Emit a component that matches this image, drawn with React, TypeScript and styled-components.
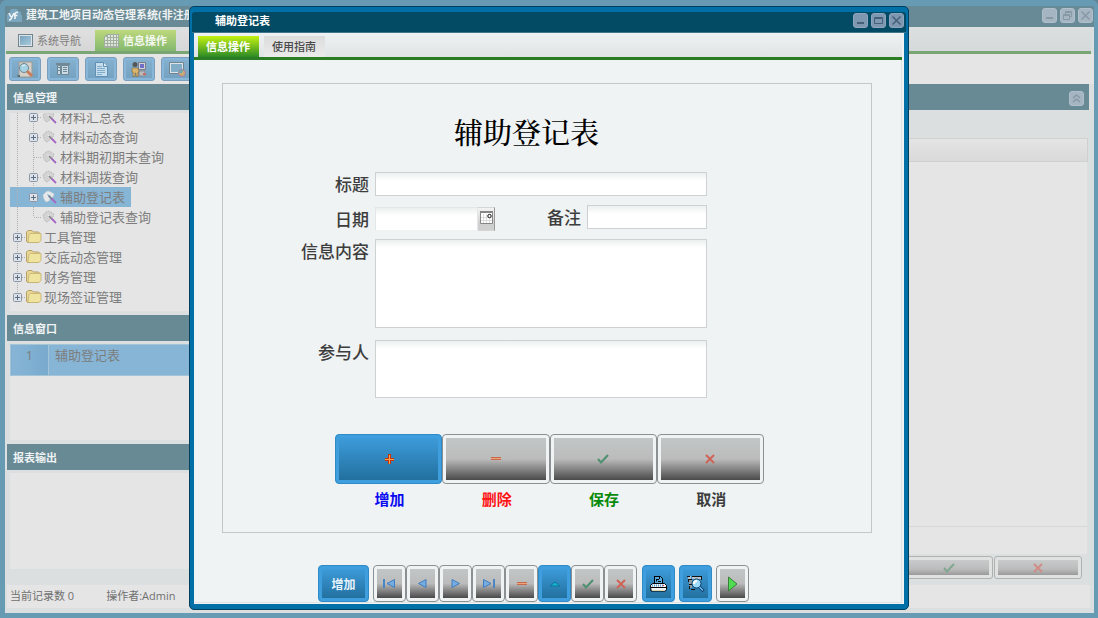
import React from "react";
import styled, { createGlobalStyle, css } from "styled-components";

const GlobalStyle = createGlobalStyle`
  *, *::before, *::after { box-sizing: border-box; }
  html, body { margin: 0; padding: 0; }
  body, button, input, textarea {
    font-family: "Open Sans", "Noto Sans CJK SC", sans-serif;
    font-size: 11px;
  }
  button { cursor: pointer; }
  h1, h2, ul { margin: 0; padding: 0; }
`;

/* ---------- main window ---------- */

const Desktop = styled.div`
  position: relative;
  display: flex;
  min-height: 100vh;
  background: #628496;
`;

const MainWindow = styled.div`
  flex: 1;
  display: flex;
  flex-direction: column;
  border: 5px solid #679ab3;
  border-top: 6px solid #679ab3;
  border-right-width: 4px;
  border-radius: 6px 6px 0 0;
  background: #dcdfdf;
  box-shadow: inset 0 0 0 1px #dcdfdf;
`;

const MainTitle = styled.header`
  display: flex;
  align-items: center;
  gap: 4px;
  height: 21px;
  padding: 0 0 3px 2px;
  background: #688a96;
`;

const MainTitleText = styled.h1`
  flex: 1;
  color: #eef2f3;
  font-size: 11px;
  line-height: 18px;
`;

const WindowButtons = styled.div`
  display: flex;
  gap: 3px;
  padding-right: 1px;
`;

const WindowButton = styled.button<{ $faded?: boolean }>`
  display: flex;
  align-items: center;
  justify-content: center;
  width: 15px;
  height: 15px;
  padding: 0;
  border: 1px solid ${(p) => (p.$faded ? "#b0bfcb" : "#8fa5bd")};
  border-radius: 3px;
  background: ${(p) => (p.$faded ? "#a5b5c2" : "#7e98b2")};
  color: ${(p) => (p.$faded ? "#8798a6" : "#465f78")};
`;

const MainTabs = styled.nav`
  display: flex;
  align-items: flex-end;
  height: 27px;
  margin: 0 3px 0 1px;
  padding-left: 3px;
  border-bottom: 3px solid #7aa574;
  background: linear-gradient(#dcdfdf, #d5d9da);
`;

const MainTab = styled.button<{ $active?: boolean }>`
  display: flex;
  align-items: center;
  gap: 4px;
  min-width: 80px;
  height: 21px;
  padding: 0 9px;
  border: 0;
  font-size: 11px;
  line-height: 18px;
  ${(p) =>
    p.$active
      ? css`
          margin-right: 5px;
          background: linear-gradient(#bdd87c, #83b86e);
          color: #f4f8ef;
          font-weight: 700;
        `
      : css`
          padding-right: 14px;
          background: linear-gradient(#e0e0e0, #d6d6d6);
          color: #808080;
        `}
`;

const MainToolbar = styled.div`
  display: flex;
  align-items: center;
  gap: 6px;
  height: 30px;
  margin-left: 1px;
  padding-left: 3px;
  background: #e5e5e5;
`;

const ToolButton = styled.button`
  display: flex;
  align-items: center;
  justify-content: center;
  width: 32px;
  height: 24px;
  padding: 2px;
  border: 1px solid #7a9ebb;
  border-radius: 3px;
  background: linear-gradient(#84b0d0, #76a2c2) content-box, #87b6d8;
`;

const MainBody = styled.div`
  flex: 1;
  display: flex;
  margin: 0 5px 0 1px;
`;

const Sidebar = styled.aside`
  display: flex;
  flex-direction: column;
  width: 220px;
  padding-left: 1px;
`;

const PanelHeader = styled.div`
  display: flex;
  align-items: center;
  justify-content: space-between;
  height: 26px;
  padding: 2px 5px 0 6px;
  background: #678a95;
`;

const PanelTitle = styled.h2`
  color: #f0f3f4;
  font-size: 11px;
  line-height: 18px;
`;

const PanelBody = styled.div<{ $grow?: boolean }>`
  ${(p) => p.$grow && "flex: 1;"}
  margin: 3px 0 ${(p) => (p.$grow ? 16 : 4)}px 3px;
  background: #e5e5e5;
`;

const TreeList = styled.ul`
  list-style: none;
  padding-bottom: 4px;
`;

const TreeItem = styled.li<{ $clipped?: boolean }>`
  display: flex;
  height: ${(p) => (p.$clipped ? 14 : 20)}px;
  align-items: flex-end;
  overflow: hidden;
`;

const TreeButton = styled.button<{ $selected?: boolean }>`
  display: flex;
  align-items: center;
  height: 20px;
  padding: 0 6px 0 0;
  border: 0;
  background: ${(p) => (p.$selected ? "#87b5d6" : "transparent")};
  color: #7d7d7d;
  font-size: 13px;
  line-height: 20px;
`;

const TreeCell = styled.svg`
  display: block;
  width: 16px;
  height: 20px;
  flex: none;
`;

const TreeText = styled.span`
  padding-left: 2px;
`;

const WindowList = styled.table`
  width: 100%;
  border-collapse: collapse;
  color: #7d7d7d;
`;

const WindowRow = styled.tr`
  height: 31px;
  background: #87b5d6;
  border: 1px solid #a5c4d8;
`;

const IndexCell = styled.td`
  width: 38px;
  padding: 0;
  border-right: 1px solid #a5c4d8;
  background: linear-gradient(90deg, #87b5d6, #78aacd);
  text-align: center;
  vertical-align: top;
  font-size: 13px;
  line-height: 20px;
`;

const NameCell = styled.td`
  padding: 0 0 0 6px;
  vertical-align: top;
  font-size: 13px;
  line-height: 20px;
`;

const ListBody = styled(PanelBody)`
  height: 96px;
`;

const MainPane = styled.main`
  flex: 1;
  display: flex;
  flex-direction: column;
`;

const GridHeader = styled.div`
  height: 24px;
  margin: 28px 1px 0 0;
  border: 1px solid #cfd1d1;
  background: linear-gradient(#e4e4e4, #d9d9d9);
`;

const GridArea = styled.div`
  flex: 1;
  margin-right: 2px;
  background: #e5e5e5;
`;

const GridFooter = styled.div`
  height: 28px;
  margin-right: 2px;
  border-top: 1px solid #d6d8d8;
  background: #e5e5e5;
`;

const PaneActions = styled.div`
  display: flex;
  justify-content: flex-end;
  gap: 1px;
  padding: 2px 7px 6px 0;
`;

const FadedButton = styled.button`
  display: flex;
  align-items: center;
  justify-content: center;
  width: 88px;
  height: 23px;
  padding: 3px;
  border: 1px solid #b0b2b2;
  border-radius: 3px;
  background: linear-gradient(#c8cacb, #bcbcbc 60%, #9a9a9a) content-box, #e0e2e2;
`;

const StatusBar = styled.footer`
  display: flex;
  gap: 32px;
  height: 23px;
  margin: 0 4px 5px 2px;
  padding-left: 3px;
  background: #e5e5e5;
  color: #707070;
  line-height: 22px;
`;

/* ---------- dialog ---------- */

const Dialog = styled.section`
  position: absolute;
  inset: 6px 189px 8px;
  display: flex;
  flex-direction: column;
  border: 1px solid #003f5e;
  border-radius: 5px;
  background: #0070a6;
  padding: 5px 4px;
`;

const DialogTitle = styled.header`
  display: flex;
  align-items: center;
  justify-content: space-between;
  height: 21px;
  margin: 0 -2px;
  padding: 0 1px 4px 23px;
  border-radius: 3px 3px 0 0;
  background: #034a64;
  border-bottom: 1px solid #43788c;
`;

const DialogTitleText = styled.h2`
  padding-top: 1px;
  color: #fff;
  font-size: 11px;
  line-height: 16px;
`;

const DialogBody = styled.div`
  flex: 1;
  display: flex;
  flex-direction: column;
  padding: 0 2px 1px 0;
  background: #eff3f4;
`;

const DialogTabs = styled.nav`
  display: flex;
  align-items: flex-end;
  gap: 5px;
  height: 27px;
  padding-left: 4px;
  border-bottom: 3px solid #2b7d23;
  background: linear-gradient(#eef2f3, #dfe4e4);
`;

const DialogTab = styled.button<{ $active?: boolean }>`
  height: 21px;
  padding: 0 9px 0 8px;
  border: 0;
  font-size: 11px;
  line-height: 18px;
  background: ${(p) =>
    p.$active ? "linear-gradient(#c4f312, #2c8a26)" : "linear-gradient(#dcdcdc, #ebebeb)"};
  color: ${(p) => (p.$active ? "#fff" : "#4a4a4a")};
  font-weight: ${(p) => (p.$active ? 700 : 500)};
`;

const DialogContent = styled.div`
  flex: 1;
  display: flex;
  flex-direction: column;
  padding: 23px 29px 0 28px;
  border-right: 1px solid #dde2e3;
  border-bottom: 1px solid #dde2e3;
`;

const FormBox = styled.form`
  flex: 1;
  padding: 30px 107px 0 78px;
  border: 1px solid #c3c7c9;
`;

const FormTitle = styled.h1`
  padding: 0 12px 0 0;
  color: #000;
  font-family: "Liberation Serif", "Noto Serif CJK SC", "Noto Sans CJK SC", serif;
  font-size: 29px;
  font-weight: 500;
  line-height: 40px;
  text-align: center;
`;

const Fields = styled.div`
  display: grid;
  grid-template-columns: 68px 1fr;
  column-gap: 6px;
  margin: 18px 57px 0 0;
`;

const FieldLabel = styled.label`
  padding-top: 1px;
  color: #3d3d3d;
  font-size: 17px;
  font-weight: 500;
  line-height: 24px;
  text-align: right;
  white-space: nowrap;
`;

const fieldLook = css`
  display: block;
  width: 100%;
  margin: 0;
  padding: 2px 4px;
  border: 1px solid #cdd1d2;
  border-radius: 0;
  outline: 0;
  background: linear-gradient(#edf0f0, #fff 8px);
`;

const TextInput = styled.input`
  ${fieldLook}
  height: 24px;
`;

const DateInput = styled(TextInput)`
  border-color: #e3e7e8 #e3e7e8 #eff3f4;
`;

const TextArea = styled.textarea<{ $tall?: boolean }>`
  ${fieldLook}
  height: ${(p) => (p.$tall ? 89 : 58)}px;
  margin-bottom: ${(p) => (p.$tall ? 12 : 36)}px;
  resize: none;
`;

const SplitRow = styled.div`
  display: grid;
  grid-template-columns: 1fr 80px 1fr;
  column-gap: 6px;
  align-items: start;
  margin: 8px 0;
`;

const DateField = styled.div`
  display: flex;
  padding-top: 2px;
`;

const DateLabel = styled(FieldLabel)`
  padding-top: 11px;
`;

const CalendarButton = styled.button`
  display: flex;
  flex: none;
  align-items: flex-start;
  justify-content: center;
  width: 17px;
  height: 24px;
  padding: 3px 1px 0;
  border: 1px solid #d6d6d6;
  border-left: 0;
  border-right-color: #999;
  background: linear-gradient(#f4f4f4, #cfcfcf 70%);
`;

const ActionRow = styled.div`
  display: grid;
  grid-template-columns: repeat(4, 1fr);
  margin-left: 34px;
`;

const Action = styled.div`
  display: flex;
  flex-direction: column;
`;

const ActionLabel = styled.label<{ $color: string }>`
  padding: 5px 0 0 2px;
  color: ${(p) => p.$color};
  font-size: 15px;
  font-weight: 700;
  line-height: 20px;
  text-align: center;
`;

const BevelButton = styled.button<{ $primary?: boolean; $size: "action" | "text" | "icon" }>`
  display: flex;
  align-items: center;
  justify-content: center;
  width: ${(p) => ({ action: "100%", text: "51px", icon: "33px" })[p.$size]};
  height: ${(p) => (p.$size === "action" ? 50 : 37)}px;
  padding: 3px;
  border: 1px solid ${(p) => (p.$primary ? "#2f8ac6" : "#8c9092")};
  border-radius: 4px;
  color: #e8f3fb;
  font-size: 12px;
  font-weight: 700;
  background: ${(p) =>
    p.$primary
      ? "linear-gradient(#3d9bd9, #22709f) content-box, #3f9edd"
      : "linear-gradient(#c2c6c7, #bbbbbb 50%, #4a4a4a) content-box, #f0f3f4"};
`;

const NavBar = styled.div`
  display: flex;
  justify-content: center;
  gap: 4px;
  padding: 32px 27px 0 0;
`;

const NavGroup = styled.div`
  display: flex;
  margin-right: 1px;
`;

/* ---------- drawings ---------- */

const Minimize = () => (
  <svg width="11" height="11" viewBox="0 0 11 11">
    <path d="M2 7h7v2H2z" fill="currentColor" />
  </svg>
);
const Maximize = () => (
  <svg width="11" height="11" viewBox="0 0 11 11" fill="none" stroke="currentColor">
    <path d="M1.5 2.5h8v6h-8zM1.5 3.5h8" />
  </svg>
);
const Restore = () => (
  <svg width="11" height="11" viewBox="0 0 11 11" fill="none" stroke="currentColor">
    <path d="M3.5 4V1.500h6v5H8M3.500 2.500h6M1.500 4.500h6v5h-6zM1.500 5.500h6" />
  </svg>
);
const Close = () => (
  <svg width="11" height="11" viewBox="0 0 11 11" fill="none" stroke="currentColor" strokeWidth="1.500">
    <path d="M1.500 1.500l8 8M9.500 1.500l-8 8" />
  </svg>
);
const Collapse = () => (
  <svg width="11" height="11" viewBox="0 0 11 11" fill="none" stroke="currentColor" strokeWidth="1.500">
    <path d="M2 5l3.500-3L9 5M2 9l3.500-3L9 9" />
  </svg>
);

const Logo = () => (
  <svg width="15" height="13" viewBox="0 0 15 13">
    <path d="M3 13a3 3 0 0 1-3-5 3 3 0 0 1 3-4 4 4 0 0 1 8-2 3 3 0 0 1 3 4 3 3 0 0 1-1 7z" fill="#7ba6bf" />
    <path d="M2 4l2 4M7 4l-3 6q-1 1-2 1M8 10V5q0-2 3-1.500M7 6.500h3.500" stroke="#eef4f6" strokeWidth="1.600" fill="none" />
  </svg>
);
const ScreenIcon = () => (
  <svg width="15" height="13" viewBox="0 0 15 13">
    <defs>
      <linearGradient id="screen" x1="0" y1="0" x2="1" y2="1">
        <stop offset="0" stopColor="#76a3bf" />
        <stop offset="1" stopColor="#a9cadb" />
      </linearGradient>
    </defs>
    <path d="M0 0h15v13H0z" fill="#72848e" />
    <path d="M1 1h13v11H1z" fill="#dce4e8" />
    <path d="M2 2h11v9H2z" fill="url(#screen)" />
  </svg>
);
const GridIcon = () => (
  <svg width="15" height="14" viewBox="0 0 15 14">
    <path d="M3 0h12v14H0V3z" fill="#a2aea0" />
    <path
      d="M1 3h2v1H1zM4 1h2v2H4zM7 1h2v2H7zM10 1h2v2h-2zM13 1h1v2h-1zM1 4h2v2H1zM4 4h2v2H4zM7 4h2v2H7zM10 4h2v2h-2zM13 4h1v2h-1zM1 7h2v2H1zM4 7h2v2H4zM7 7h2v2H7zM10 7h2v2h-2zM13 7h1v2h-1zM1 10h2v2H1zM4 10h2v2H4zM7 10h2v2H7zM10 10h2v2h-2zM13 10h1v2h-1z"
      fill="#dfe6dc"
    />
  </svg>
);
const SearchPageIcon = () => (
  <svg width="17" height="17" viewBox="0 0 17 17">
    <path d="M2 1h13v15H2z" fill="#d5d0c8" stroke="#9a9a96" />
    <circle cx="7" cy="7" r="4.500" fill="#a5d3e6" stroke="#71868f" />
    <path d="M5 5l3-1" stroke="#eef8fb" />
    <path d="M10 10l5 5" stroke="#c87e5c" strokeWidth="3" />
    <path d="M0 14h3v2H1z" fill="#5e6c74" />
  </svg>
);
const TableIcon = () => (
  <svg width="15" height="14" viewBox="0 0 15 14">
    <path d="M0 1h14v2H0z" fill="#718896" />
    <path d="M1.500 3.500h3v9h-3zM5.500 3.500h7v9h-7z" fill="#cddce4" stroke="#6e8795" />
    <path d="M2 5.500h2M2 8.500h2M7 5.500h4M7 7.500h4M7 9.500h4" stroke="#6e8795" />
  </svg>
);
const DocumentIcon = () => (
  <svg width="13" height="15" viewBox="0 0 13 15">
    <path d="M.5.500h8l4 4v10H.500z" fill="#c6deed" stroke="#5f8fb3" />
    <path d="M8.500.500v4h4" fill="#e0eef6" stroke="#5f8fb3" />
    <path d="M2 4.500h5M2 6.500h8M2 8.500h8M2 10.500h8M2 12.500h5" stroke="#7faccb" />
  </svg>
);
const PeopleIcon = () => (
  <svg width="16" height="16" viewBox="0 0 16 16">
    <path d="M7.500 1.500h7v7h-7z" fill="#d2d3d6" stroke="#7e7c88" />
    <path d="M9 3h4v4H9z" fill="#706fc8" />
    <path d="M8 10h6v5H8z" fill="#bababa" stroke="#8b8b90" />
    <circle cx="4" cy="3.500" r="2.500" fill="#565656" />
    <path d="M1 7h6l1 4H7v4.500H5V12H4v3.500H2V11H1z" fill="#dcb56d" stroke="#79683f" strokeWidth=".6" />
    <path d="M12 12h3v2h-3z" fill="#c26d6d" />
  </svg>
);
const ScreenGlobeIcon = () => (
  <svg width="17" height="15" viewBox="0 0 17 15">
    <path d="M.5.500h14v11H.500z" fill="#dce4e8" stroke="#72848e" />
    <path d="M2 2h11v8H2z" fill="#82adc6" />
    <circle cx="13" cy="11" r="3.500" fill="#c7aa75" stroke="#9b7eab" />
    <path d="M10 11a3 3 0 0 1 4-3l-1 3z" fill="#67aab8" />
  </svg>
);

const Guide = () => (
  <TreeCell viewBox="0 0 16 20">
    <path d="M7.500 0v20" stroke="#b0b0b0" strokeDasharray="1 1" />
  </TreeCell>
);
const Branch = ({ toggle, last }: { toggle?: boolean; last?: boolean }) => (
  <TreeCell viewBox="0 0 16 20">
    <path d={last ? "M7.500 0v10M8 10.500h8" : "M7.500 0v20M8 10.500h8"} stroke="#b0b0b0" strokeDasharray="1 1" />
    {toggle && (
      <>
        <rect x="3.500" y="6.500" width="8" height="8" rx="1" fill="#dde2e8" stroke="#8b97a8" />
        <path d="M5 10.500h5M7.500 8v5" stroke="#5b6b80" />
      </>
    )}
  </TreeCell>
);
const FolderIcon = () => (
  <TreeCell viewBox="0 0 16 20">
    <path d="M.5 14V5l1.500-1.500h4L7.500 5h5L14 6.500V14l-1.500 1.500h-11z" fill="#e8d793" stroke="#b5a06a" />
    <path d="M2 14.500l1-7 1-1h11v7l-2 2H3z" fill="#efe3a0" stroke="#c4b070" strokeWidth=".8" />
  </TreeCell>
);
const WandIcon = ({ lit }: { lit?: boolean }) => (
  <TreeCell viewBox="0 0 16 20">
    <path
      d="M1 8l3-3 2-1 3 1 3 2-1 3-3 1-1 3-3 1-2-3z"
      fill={lit ? "#e6e8ea" : "#d2d2d2"}
      stroke={lit ? "#c9d0d6" : "#bdbdbd"}
      strokeDasharray="2 1"
    />
    <path d="M5 7l2 4 2-2z" fill={lit ? "#7fa9cc" : "#e8e8e8"} />
    <path d="M7 9l3 3" stroke="#7a7a80" strokeWidth="1.500" />
    <path d="M9.500 11.500L14 16" stroke="#a368c4" strokeWidth="1.800" />
  </TreeCell>
);

const CalendarIcon = () => (
  <svg width="13" height="13" viewBox="0 0 13 13">
    <path d="M.500.500h12v12H.500z" fill="#fff" stroke="#858585" />
    <path d="M0 0h13v2H0z" fill="#858585" />
    <path d="M1 6.500h11M1 9.500h11M3.500 3v9M6.500 3v9M9.500 3v9" stroke="#dcdcdc" />
    <circle cx="9.500" cy="5" r="1.700" fill="#fff" stroke="#111" />
  </svg>
);
const PlusIcon = () => (
  <svg width="12" height="12" viewBox="0 0 12 12">
    <path d="M5 1h3v4h3v3H8v3H5V8H2V5h3z" fill="#c9330a" />
    <path d="M6 2h1v4h4v1H7v4H6V7H2V6h4z" fill="#ffa348" />
  </svg>
);
const MinusIcon = () => (
  <svg width="12" height="12" viewBox="0 0 12 12">
    <path d="M1 4h10v3H1z" fill="#c9694b" />
    <path d="M1 5h10v1H1z" fill="#eba57c" />
  </svg>
);
const CheckIcon = ({ color = "#4f9070" }: { color?: string }) => (
  <svg width="12" height="12" viewBox="0 0 12 12" fill="none">
    <path d="M1 6l3 3.500 7-7.500" stroke={color} strokeWidth="2" />
  </svg>
);
const CrossIcon = ({ color = "#cf6357" }: { color?: string }) => (
  <svg width="12" height="12" viewBox="0 0 12 12" fill="none">
    <path d="M2 2l8 8M10 2l-8 8" stroke={color} strokeWidth="2" />
  </svg>
);
const ArrowIcon = ({ dir, bar }: { dir: "left" | "right"; bar?: boolean }) => (
  <svg width="13" height="11" viewBox="0 0 13 11">
    <g transform={dir === "right" ? "translate(13 0) scale(-1 1)" : undefined}>
      <path d={bar ? "M11.500 1.500v8L4 5.500z" : "M10 1.500v8L2.500 5.500z"} fill="#76acdf" stroke="#3e7dc0" />
      {bar && <path d="M1 1v9" stroke="#4a86c4" strokeWidth="2" />}
    </g>
  </svg>
);
const UpIcon = () => (
  <svg width="12" height="8" viewBox="0 0 12 8">
    <path d="M1 6l5-4 5 4z" fill="#14b5d4" stroke="#0a7597" />
  </svg>
);
const PrinterIcon = () => (
  <svg width="17" height="17" viewBox="0 0 17 17">
    <path d="M4.500 8V1.500h6l2 2V8" fill="#5aa9dc" stroke="#000" />
    <path d="M4 1.500h3M6.500 4v2.500M7 4.500h2M8 6.500h3M9.500 2v2" stroke="#000" fill="none" />
    <path d="M2.500 8.500h12l2 2v4l-1 1.500H1L.500 10.500z" fill="#f4f4f4" stroke="#000" />
    <path d="M2 10.500h12" stroke="#4d98cb" strokeWidth="2" strokeDasharray="1 1" />
    <path d="M1 12.500h15" stroke="#000" />
    <path d="M13 10h1v1h-1z" fill="#e22" />
    <path d="M2 15.500h13" stroke="#d9d3b0" />
  </svg>
);
const PreviewIcon = () => (
  <svg width="18" height="18" viewBox="0 0 18 18">
    <path d="M1 1h3v3H1zM5 1h9v3H5z" fill="#b9c3c9" />
    <path d="M0 1.500h3M5 1.500h10M1 4.500h4M14.500 1v4" stroke="#111" />
    <path d="M2 5h3v8H2z" fill="#8d9ba5" />
    <path d="M1.500 5v2M2 9.500h3M2.500 11v3M4 14.500h4" stroke="#111" fill="none" />
    <circle cx="9.500" cy="8.500" r="4.500" fill="#9fdcfb" stroke="#0d3c60" />
    <path d="M7 9q0-3 3-3" stroke="#fff" strokeWidth="2" fill="none" />
    <path d="M12.500 12l4 4" stroke="#0c2f60" strokeWidth="3" />
    <path d="M12.500 12l3.500 3.500" stroke="#6fc4f4" strokeWidth="1.500" />
  </svg>
);
const PlayIcon = () => (
  <svg width="11" height="16" viewBox="0 0 11 16">
    <path d="M1.500 1v14l8.500-7z" fill="#4fdc50" stroke="#397f39" />
  </svg>
);

/* ---------- page ---------- */

type Node = { name: string; nested?: boolean; toggle?: boolean; last?: boolean; selected?: boolean };

const nodes: Node[] = [
  { name: "材料汇总表", nested: true, toggle: true },
  { name: "材料动态查询", nested: true, toggle: true },
  { name: "材料期初期末查询", nested: true },
  { name: "材料调拨查询", nested: true, toggle: true },
  { name: "辅助登记表", nested: true, toggle: true, selected: true },
  { name: "辅助登记表查询", nested: true, last: true },
  { name: "工具管理", toggle: true },
  { name: "交底动态管理", toggle: true },
  { name: "财务管理", toggle: true },
  { name: "现场签证管理", toggle: true, last: true },
];

const tools = [
  { name: "查询", icon: <SearchPageIcon /> },
  { name: "表格", icon: <TableIcon /> },
  { name: "文档", icon: <DocumentIcon /> },
  { name: "用户", icon: <PeopleIcon /> },
  { name: "网络", icon: <ScreenGlobeIcon /> },
];

const actions = [
  { id: "add", name: "增加", color: "#0a0af0", icon: <PlusIcon />, primary: true },
  { id: "remove", name: "删除", color: "#ff1414", icon: <MinusIcon /> },
  { id: "save", name: "保存", color: "#0a8a0a", icon: <CheckIcon /> },
  { id: "cancel", name: "取消", color: "#3d3d3d", icon: <CrossIcon /> },
];

const navButtons = [
  { name: "第一条", icon: <ArrowIcon dir="left" bar /> },
  { name: "上一条", icon: <ArrowIcon dir="left" /> },
  { name: "下一条", icon: <ArrowIcon dir="right" /> },
  { name: "最后一条", icon: <ArrowIcon dir="right" bar /> },
  { name: "删除", icon: <MinusIcon /> },
  { name: "编辑", icon: <UpIcon />, primary: true },
  { name: "保存", icon: <CheckIcon /> },
  { name: "取消", icon: <CrossIcon /> },
];

export default function App() {
  return (
    <Desktop>
      <GlobalStyle />
      <MainWindow>
        <MainTitle>
          <Logo />
          <MainTitleText>建筑工地项目动态管理系统(非注册)</MainTitleText>
          <WindowButtons>
            <WindowButton $faded aria-label="最小化"><Minimize /></WindowButton>
            <WindowButton $faded aria-label="还原"><Restore /></WindowButton>
            <WindowButton $faded aria-label="关闭"><Close /></WindowButton>
          </WindowButtons>
        </MainTitle>
        <MainTabs>
          <MainTab><ScreenIcon />系统导航</MainTab>
          <MainTab $active><GridIcon />信息操作</MainTab>
          <MainTab aria-label="使用指南" />
        </MainTabs>
        <MainToolbar>
          {tools.map((t) => (
            <ToolButton key={t.name} aria-label={t.name}>{t.icon}</ToolButton>
          ))}
        </MainToolbar>
        <MainBody>
          <Sidebar>
            <PanelHeader><PanelTitle>信息管理</PanelTitle></PanelHeader>
            <PanelBody>
              <TreeList>
                {nodes.map((n, i) => (
                  <TreeItem key={n.name} $clipped={i === 0}>
                    <TreeButton $selected={n.selected}>
                      {n.nested && <Guide />}
                      <Branch toggle={n.toggle} last={n.last} />
                      {n.nested ? <WandIcon lit={n.selected} /> : <FolderIcon />}
                      <TreeText>{n.name}</TreeText>
                    </TreeButton>
                  </TreeItem>
                ))}
              </TreeList>
            </PanelBody>
            <PanelHeader><PanelTitle>信息窗口</PanelTitle></PanelHeader>
            <ListBody>
              <WindowList>
                <tbody>
                  <WindowRow>
                    <IndexCell>1</IndexCell>
                    <NameCell>辅助登记表</NameCell>
                  </WindowRow>
                </tbody>
              </WindowList>
            </ListBody>
            <PanelHeader><PanelTitle>报表输出</PanelTitle></PanelHeader>
            <PanelBody $grow />
          </Sidebar>
          <MainPane>
            <PanelHeader>
              <span />
              <WindowButton $faded aria-label="收起"><Collapse /></WindowButton>
            </PanelHeader>
            <GridHeader />
            <GridArea />
            <GridFooter />
            <PaneActions>
              <FadedButton aria-label="保存"><CheckIcon color="#80a890" /></FadedButton>
              <FadedButton aria-label="取消"><CrossIcon color="#cf8d86" /></FadedButton>
            </PaneActions>
          </MainPane>
        </MainBody>
        <StatusBar>
          <span>当前记录数 0</span>
          <span>操作者:Admin</span>
        </StatusBar>
      </MainWindow>

      <Dialog role="dialog" aria-labelledby="dialog-title">
        <DialogTitle>
          <DialogTitleText id="dialog-title">辅助登记表</DialogTitleText>
          <WindowButtons>
            <WindowButton aria-label="最小化"><Minimize /></WindowButton>
            <WindowButton aria-label="最大化"><Maximize /></WindowButton>
            <WindowButton aria-label="关闭"><Close /></WindowButton>
          </WindowButtons>
        </DialogTitle>
        <DialogBody>
          <DialogTabs>
            <DialogTab $active>信息操作</DialogTab>
            <DialogTab>使用指南</DialogTab>
          </DialogTabs>
          <DialogContent>
            <FormBox onSubmit={(e) => e.preventDefault()}>
              <FormTitle>辅助登记表</FormTitle>
              <Fields>
                <FieldLabel htmlFor="title">标题</FieldLabel>
                <TextInput id="title" type="text" />
                <DateLabel htmlFor="date">日期</DateLabel>
                <SplitRow>
                  <DateField>
                    <DateInput id="date" type="text" />
                    <CalendarButton type="button" aria-label="选择日期"><CalendarIcon /></CalendarButton>
                  </DateField>
                  <FieldLabel htmlFor="remark">备注</FieldLabel>
                  <TextInput id="remark" type="text" />
                </SplitRow>
                <FieldLabel htmlFor="content">信息内容</FieldLabel>
                <TextArea id="content" $tall />
                <FieldLabel htmlFor="people">参与人</FieldLabel>
                <TextArea id="people" />
              </Fields>
              <ActionRow>
                {actions.map((a) => (
                  <Action key={a.id}>
                    <BevelButton id={a.id} type="button" $size="action" $primary={a.primary}>
                      {a.icon}
                    </BevelButton>
                    <ActionLabel htmlFor={a.id} $color={a.color}>{a.name}</ActionLabel>
                  </Action>
                ))}
              </ActionRow>
            </FormBox>
            <NavBar>
              <BevelButton $size="text" $primary>增加</BevelButton>
              <NavGroup>
                {navButtons.map((b) => (
                  <BevelButton key={b.name} $size="icon" $primary={b.primary} aria-label={b.name}>
                    {b.icon}
                  </BevelButton>
                ))}
              </NavGroup>
              <BevelButton $size="icon" $primary aria-label="打印"><PrinterIcon /></BevelButton>
              <BevelButton $size="icon" $primary aria-label="预览"><PreviewIcon /></BevelButton>
              <BevelButton $size="icon" aria-label="执行"><PlayIcon /></BevelButton>
            </NavBar>
          </DialogContent>
        </DialogBody>
      </Dialog>
    </Desktop>
  );
}
